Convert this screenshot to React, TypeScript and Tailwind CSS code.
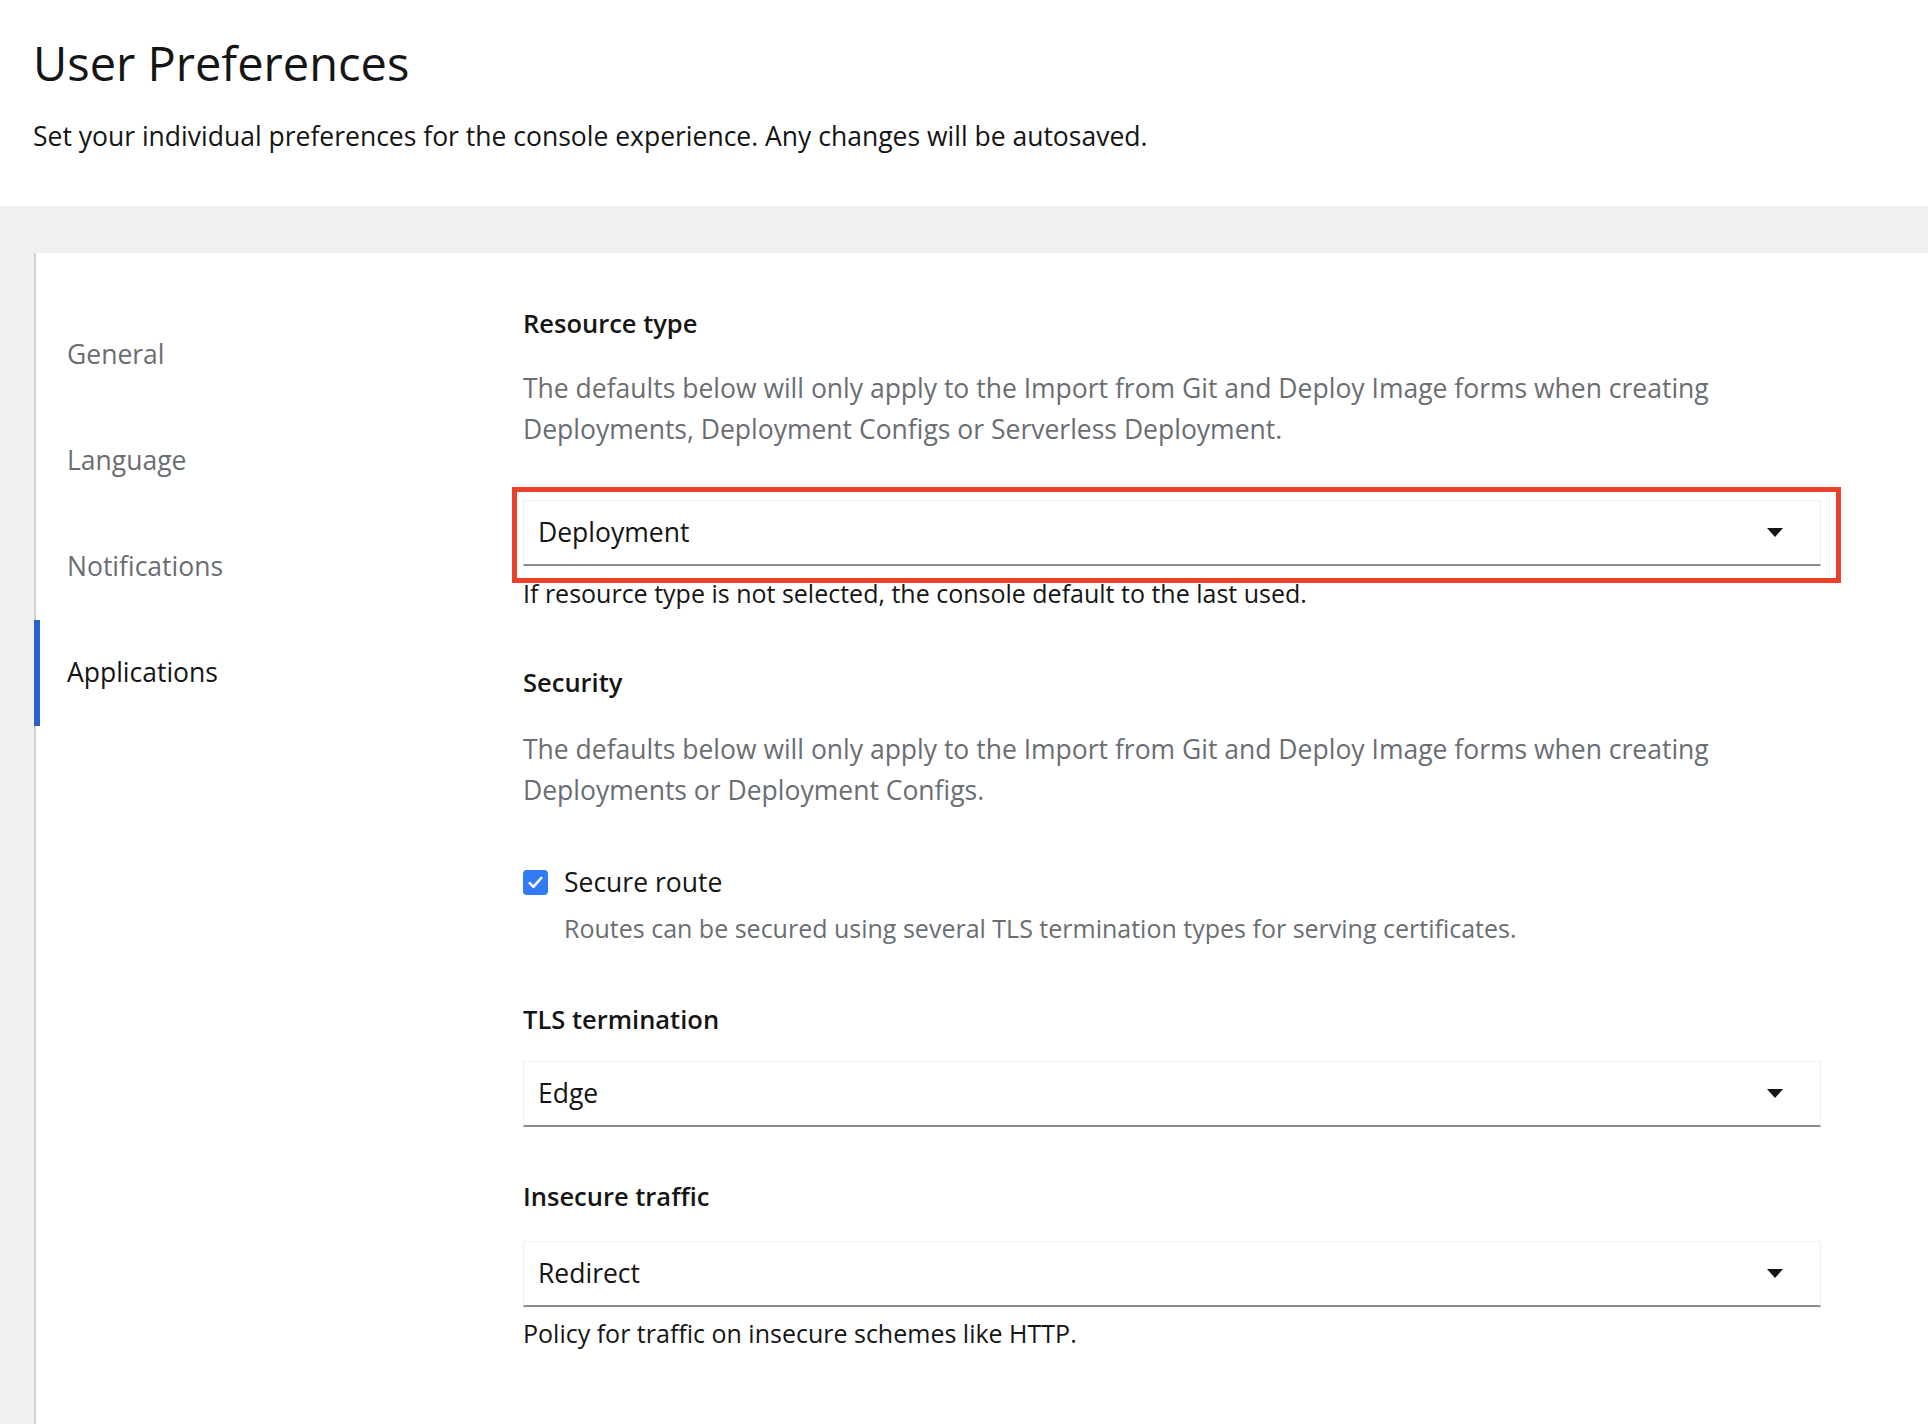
import React, { useState } from 'react';

const navItems = ['General', 'Language', 'Notifications', 'Applications'];

function Caret() {
  return (
    <svg width="16" height="9" viewBox="0 0 16 9" className="shrink-0">
      <path d="M0 0h16L8 9z" fill="#151515" />
    </svg>
  );
}

function SelectBox({ value, highlighted }: { value: string; highlighted?: boolean }) {
  return (
    <div className="relative">
      <div className="flex h-[66px] items-center justify-between border border-b-2 border-[#f0f0f0] border-b-[#8a8d90] bg-white pl-[14px] pr-[37px]">
        <span className="text-[26.5px] text-[#151515]">{value}</span>
        <Caret />
      </div>
      {highlighted && (
        <div className="pointer-events-none absolute -left-[11px] -top-[13px] -right-[20px] -bottom-[17px] border-[5px] border-[#e9412a]" />
      )}
    </div>
  );
}

export default function App() {
  const [active, setActive] = useState('Applications');
  const [secure, setSecure] = useState(true);

  return (
    <div className="flex min-h-screen flex-col bg-white font-['Open_Sans','Noto_Sans',sans-serif] text-[#151515]">
      {/* page header */}
      <div className="pl-[33px] pt-[36px] pb-[50px]">
        <h1 className="text-[47px] font-medium leading-[55px]">User Preferences</h1>
        <p className="mt-[26px] text-[26.5px] leading-[39px]">
          Set your individual preferences for the console experience. Any changes will be autosaved.
        </p>
      </div>

      <div className="flex flex-1 flex-col bg-[#f0f0f0] pl-[34px] pt-[47px]">
        <div className="flex flex-1 border-l-2 border-[#d2d2d2] bg-white">
          {/* vertical tabs */}
          <ul className="w-[487px] shrink-0 pt-[49px]">
            {navItems.map((item) => (
              <li key={item} className="relative">
                {active === item && <span className="absolute -left-[2px] top-0 h-full w-[6px] bg-[#2b62c9]" />}
                <button
                  onClick={() => setActive(item)}
                  className={`flex h-[106px] items-center pl-[31px] text-[26.5px] ${
                    active === item ? 'text-[#151515]' : 'text-[#6a6e73]'
                  }`}
                >
                  {item}
                </button>
              </li>
            ))}
          </ul>

          {/* form */}
          <div className="w-[1298px] pt-[51px] pb-[60px]">
            <h2 className="text-[25.5px] font-semibold leading-[39px]">Resource type</h2>
            <p className="mt-[25px] text-[26.5px] leading-[41px] text-[#6a6e73]">
              The defaults below will only apply to the Import from Git and Deploy Image forms when creating
              <br />
              Deployments, Deployment Configs or Serverless Deployment.
            </p>
            <div className="mt-[50px]">
              <SelectBox value="Deployment" highlighted />
            </div>
            <p className="mt-[8px] text-[25px] leading-[39px]">
              If resource type is not selected, the console default to the last used.
            </p>

            <h2 className="mt-[50px] text-[25.5px] font-semibold leading-[39px]">Security</h2>
            <p className="mt-[27px] text-[26.5px] leading-[41px] text-[#6a6e73]">
              The defaults below will only apply to the Import from Git and Deploy Image forms when creating
              <br />
              Deployments or Deployment Configs.
            </p>

            <label className="mt-[52px] flex cursor-pointer items-center gap-[16px]">
              <button
                onClick={() => setSecure(!secure)}
                className={`flex h-[25px] w-[25px] items-center justify-center rounded-[4px] ${
                  secure ? 'bg-[#3479f5]' : 'border border-[#8a8d90] bg-white'
                }`}
              >
                {secure && (
                  <svg width="15" height="13" viewBox="0 0 15 13">
                    <path d="M1.8 7.2l3.6 3.6L13.2 2" fill="none" stroke="white" strokeWidth="2.6" strokeLinecap="round" strokeLinejoin="round" />
                  </svg>
                )}
              </button>
              <span className="text-[26.5px] leading-[39px]">Secure route</span>
            </label>
            <p className="mt-[8px] pl-[41px] text-[25px] leading-[36px] text-[#6a6e73]">
              Routes can be secured using several TLS termination types for serving certificates.
            </p>

            <h2 className="mt-[54px] text-[25.5px] font-semibold leading-[39px]">TLS termination</h2>
            <div className="mt-[22px]">
              <SelectBox value="Edge" />
            </div>

            <h2 className="mt-[50px] text-[25.5px] font-semibold leading-[39px]">Insecure traffic</h2>
            <div className="mt-[25px]">
              <SelectBox value="Redirect" />
            </div>
            <p className="mt-[7px] text-[25px] leading-[39px]">Policy for traffic on insecure schemes like HTTP.</p>
          </div>
        </div>
      </div>
    </div>
  );
}
